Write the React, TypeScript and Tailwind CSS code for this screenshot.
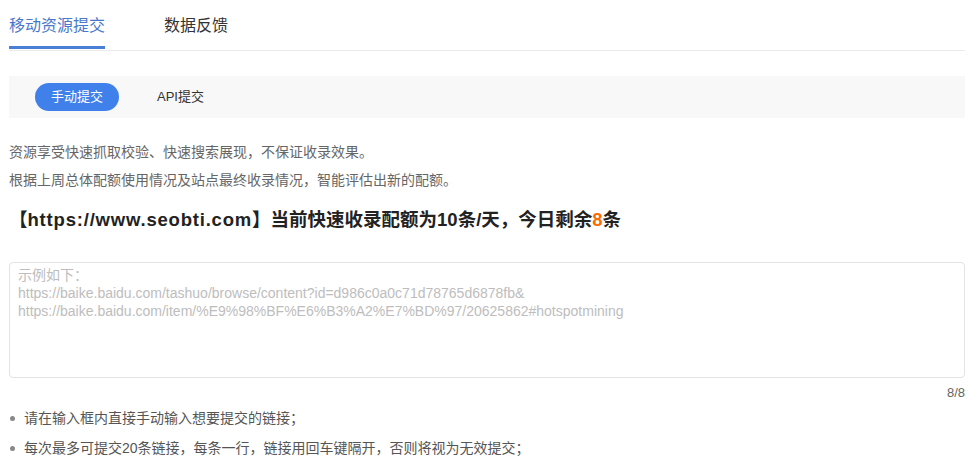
import React from 'react'

const font = { fontFamily: '"Liberation Sans", "Noto Sans CJK SC", sans-serif' }

const tips = [
  '请在输入框内直接手动输入想要提交的链接；',
  '每次最多可提交20条链接，每条一行，链接用回车键隔开，否则将视为无效提交；',
]

export default function App() {
  return (
    <div className="bg-white w-[978px] h-[465px] overflow-hidden px-[9px] text-[#333]" style={font}>
      {/* 顶部标签 */}
      <div className="flex items-end h-[51px] border-b border-[#ebebeb] mr-[4px]">
        <div className="relative h-full flex items-center text-[16px] text-[#4a78c9] pt-[1px]">
          移动资源提交
          <span className="absolute left-0 right-0 bottom-[1px] h-[3px] bg-[#4a7fd6]" />
        </div>
        <div className="h-full flex items-center text-[16px] text-[#333] ml-[59px] pt-[1px]">数据反馈</div>
      </div>

      {/* 提交方式 */}
      <div className="mt-[25px] mr-[4px] h-[42px] bg-[#f8f8f8] flex items-center px-[26px]">
        <span className="h-[28px] w-[84px] rounded-full bg-[#3f80ea] text-white text-[13px] flex items-center justify-center">
          手动提交
        </span>
        <span className="ml-[38px] text-[13px] text-[#333]">API提交</span>
      </div>

      <p className="mt-[25px] text-[14px] leading-[18px] text-[#666]">资源享受快速抓取校验、快速搜索展现，不保证收录效果。</p>
      <p className="mt-[10px] text-[14px] leading-[18px] text-[#666]">根据上周总体配额使用情况及站点最终收录情况，智能评估出新的配额。</p>

      <h2 className="mt-[19px] text-[18.5px] leading-[24px] font-bold text-[#222]">
        【<span className="tracking-[0.8px]">https://www.seobti.com</span>】当前快速收录配额为10条/天，今日剩余<span className="text-[#ff6a00]">8</span>条
      </h2>

      <textarea
        className="mt-[30px] block w-[956px] h-[116px] resize-none rounded-[4px] border border-[#e3e3e3] px-[8px] pt-[3px] pb-[4px] text-[14px] leading-[18px] text-[#333] placeholder:text-[#bdbdbd] outline-none"
        style={font}
        placeholder={'示例如下：\nhttps://baike.baidu.com/tashuo/browse/content?id=d986c0a0c71d78765d6878fb&\nhttps://baike.baidu.com/item/%E9%98%BF%E6%B3%A2%E7%BD%97/20625862#hotspotmining'}
      />
      <div className="w-[956px] text-right text-[13px] leading-[18px] text-[#666] mt-[6px]">8/8</div>

      <ul className="mt-[7px]">
        {tips.map((t, i) => (
          <li key={t} className={`flex items-center text-[14px] leading-[18px] text-[#555] ${i > 0 ? 'mt-[12px]' : ''}`}>
            <span className="w-[5px] h-[5px] rounded-full bg-[#888] ml-[1px] mr-[9px]" />
            {t}
          </li>
        ))}
      </ul>
    </div>
  )
}
